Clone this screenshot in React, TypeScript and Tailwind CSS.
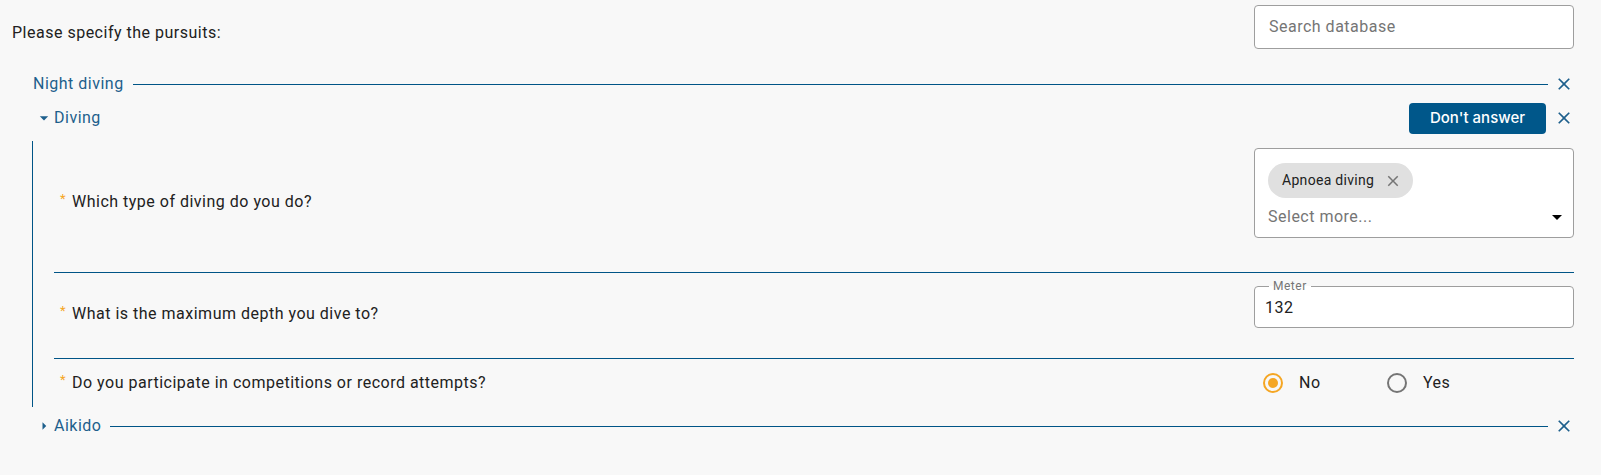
import { ReactNode } from "react"

const CloseIcon = ({ className }: { className?: string }) => (
  <svg viewBox="0 0 24 24" className={className} fill="currentColor">
    <path d="M19 6.41 17.59 5 12 10.59 6.41 5 5 6.41 10.59 12 5 17.59 6.41 19 12 13.41 17.59 19 19 17.59 13.41 12z" />
  </svg>
)

const ArrowDown = ({ className }: { className?: string }) => (
  <svg viewBox="0 0 24 24" className={className} fill="currentColor">
    <path d="M7 10l5 5 5-5z" />
  </svg>
)

const ArrowRight = ({ className }: { className?: string }) => (
  <svg viewBox="0 0 24 24" className={className} fill="currentColor">
    <path d="M10 17l5-5-5-5v10z" />
  </svg>
)

function Question({ children }: { children: ReactNode }) {
  return (
    <p className="flex items-center pl-[6px] text-[16px] leading-[20px] text-[#212121]">
      <span className="text-[#f5a623] text-[13px] w-[12px] relative -top-[3px]">*</span>
      {children}
    </p>
  )
}

function Radio({ label, checked }: { label: string; checked?: boolean }) {
  return (
    <label className="w-[124px] flex items-center gap-[16px] cursor-pointer">
      <span
        className={
          checked
            ? "w-[20px] h-[20px] rounded-full border-2 border-[#f5a623] flex items-center justify-center"
            : "w-[20px] h-[20px] rounded-full border-2 border-[#757575]"
        }
      >
        {checked && <span className="w-[10px] h-[10px] rounded-full bg-[#f5a623]" />}
      </span>
      <span className="text-[16px] text-[#212121]">{label}</span>
    </label>
  )
}

export default function App() {
  return (
    <div className="min-h-screen w-full bg-[#f8f8f8] text-[#212121] tracking-[0.5px] font-['Roboto',sans-serif]">
      {/* Header */}
      <div className="flex justify-between pl-[12px] pr-[27px] pt-[5px]">
        <p className="pt-[18px] text-[16px] leading-[20px]">Please specify the pursuits:</p>
        <div className="w-[320px] h-[44px] border border-[#9e9e9e] rounded-[4px] bg-white flex items-center pl-[14px] text-[16px] text-[#757575]">
          Search database
        </div>
      </div>

      <div className="pl-[33px] pr-[27px] mt-[19px]">
        {/* Night diving */}
        <div className="flex items-center h-[32px]">
          <span className="text-[16px] text-[#1d5f8c]">Night diving</span>
          <div className="flex-1 h-px bg-[#005587] ml-[9px] mr-[6px]" />
          <CloseIcon className="w-[20px] h-[20px] text-[#1d5f8c]" />
        </div>

        {/* Diving */}
        <div className="flex items-center h-[32px] mt-[2px]">
          <span className="w-[21px] flex justify-center">
            <ArrowDown className="w-[20px] h-[20px] text-[#1d5f8c]" />
          </span>
          <span className="text-[16px] text-[#1d5f8c]">Diving</span>
          <div className="flex-1" />
          <button className="w-[137px] h-[31px] rounded-[4px] bg-[#00578a] text-white text-[15px] tracking-normal font-medium font-['Inter',sans-serif]">
            Don't answer
          </button>
          <CloseIcon className="w-[20px] h-[20px] ml-[8px] text-[#1d5f8c]" />
        </div>

        <div className="mt-[7px] -ml-px border-l border-[#005587] pl-[21px]">
          {/* Q1 */}
          <div className="flex justify-between h-[131px]">
            <div className="pt-[51px]">
              <Question>Which type of diving do you do?</Question>
            </div>
            <div className="pt-[7px]">
              <div className="w-[320px] h-[90px] border border-[#9e9e9e] rounded-[4px] bg-white pl-[13px] pr-[4px] pt-[14px]">
                <span className="inline-flex items-center h-[35px] rounded-full bg-[#e0e0e0] pl-[14px] pr-[11px] text-[14px] tracking-[0.3px] text-[#212121]">
                  Apnoea diving
                  <CloseIcon className="w-[18px] h-[18px] ml-[10px] text-[#757575]" />
                </span>
                <div className="flex items-center justify-between mt-[7px] h-[24px]">
                  <span className="text-[16px] text-[#757575]">Select more...</span>
                  <ArrowDown className="w-[24px] h-[24px] text-black" />
                </div>
              </div>
            </div>
          </div>

          <div className="h-px bg-[#005587]" />

          {/* Q2 */}
          <div className="flex justify-between h-[85px]">
            <div className="pt-[31px]">
              <Question>What is the maximum depth you dive to?</Question>
            </div>
            <div className="pt-[7px]">
              <fieldset className="w-[320px] h-[48px] border border-[#9e9e9e] rounded-[4px] bg-white pl-[14px]">
                <legend className="px-[4px] text-[12px] leading-[12px] text-[#757575]">Meter</legend>
                <div className="text-[16px] leading-[20px] text-[#212121] pt-[6px] -ml-[4px]">132</div>
              </fieldset>
            </div>
          </div>

          <div className="h-px bg-[#005587]" />

          {/* Q3 */}
          <div className="flex justify-between items-center h-[48px]">
            <Question>Do you participate in competitions or record attempts?</Question>
            <div className="w-[320px] flex pl-[9px]">
              <Radio label="No" checked />
              <Radio label="Yes" />
            </div>
          </div>
        </div>

        {/* Aikido */}
        <div className="flex items-center h-[32px] mt-[3px]">
          <span className="w-[21px] flex justify-center">
            <ArrowRight className="w-[18px] h-[18px] text-[#1d5f8c]" />
          </span>
          <span className="text-[16px] text-[#1d5f8c]">Aikido</span>
          <div className="flex-1 h-px bg-[#005587] ml-[9px] mr-[6px]" />
          <CloseIcon className="w-[20px] h-[20px] text-[#1d5f8c]" />
        </div>
      </div>
    </div>
  )
}
